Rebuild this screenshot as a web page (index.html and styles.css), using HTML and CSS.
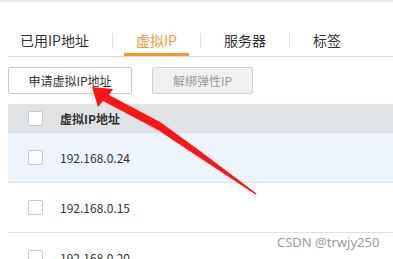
FILE: index.html
```html
<!DOCTYPE html>
<html lang="zh">
<head>
<meta charset="utf-8">
<link rel="stylesheet" href="styles.css">
</head>
<body>
<div class="topbar"></div>
<div class="page">
  <div class="tabs">
    <div class="tab">已用IP地址</div>
    <div class="sep"></div>
    <div class="tab active">虚拟IP</div>
    <div class="sep"></div>
    <div class="tab">服务器</div>
    <div class="sep"></div>
    <div class="tab">标签</div>
  </div>
  <div class="actions">
    <button class="btn">申请虚拟IP地址</button>
    <button class="btn disabled">解绑弹性IP</button>
  </div>
  <div class="table">
    <div class="row head"><span class="cb"></span><span class="cell">虚拟IP地址</span></div>
    <div class="row hover"><span class="cb"></span><span class="cell">192.168.0.24</span></div>
    <div class="row"><span class="cb"></span><span class="cell">192.168.0.15</span></div>
    <div class="row"><span class="cb"></span><span class="cell">192.168.0.20</span></div>
  </div>
</div>
<div class="watermark">CSDN @trwjy250</div>
<svg class="arrow" width="393" height="259" viewBox="0 0 393 259">
  <polygon fill="#ff1414" points="92,87 113,89 109,95 160,122 196,148 256.5,193.5 255.5,194.5 194,154 158,130 103,101 98,107"/>
</svg>
</body>
</html>
```
FILE: styles.css
```css
html, body {
  margin: 0;
  padding: 0;
  background: #fff;
  font-family: "Noto Sans CJK SC", "Noto Sans", sans-serif;
  color: #333;
  overflow: hidden;
  width: 393px;
  height: 259px;
  position: relative;
}
.topbar {
  height: 2px;
  background: #e9e9e9;
}
.page {
  padding-left: 8px;
}
.tabs {
  display: flex;
  align-items: flex-start;
  margin-top: 28px;
  border-bottom: 1px solid #dcdcdc;
}
.tab {
  font-size: 14px;
  line-height: 20px;
  padding: 0 12px 3px;
  border-bottom: 3px solid transparent;
  color: #333;
}
.tab.active {
  color: #f5953a;
  border-bottom-color: #f7962f;
}
.sep {
  width: 1px;
  height: 15px;
  margin: 3px 11px 0;
  background: #dddddd;
}
.actions {
  display: flex;
  gap: 20px;
  margin-top: 10px;
}
.btn {
  font-family: inherit;
  font-size: 12px;
  height: 27px;
  padding: 0;
  width: 124px;
  background: #fff;
  border: 1px solid #c9c9c9;
  border-radius: 2px;
  color: #333;
}
.btn.disabled {
  width: 101px;
  background: #f0f0f0;
  border-color: #d2d2d2;
  color: #9a9a9a;
}
.table {
  margin-top: 10px;
}
.row {
  display: flex;
  align-items: center;
  height: 49px;
  padding-left: 20px;
  border-bottom: 1px solid #e0e0e0;
  font-size: 12px;
}
.row.head {
  height: 29px;
  background: #e0e3e5;
  border-bottom: none;
  font-weight: bold;
}
.row.hover {
  background: #edf4fc;
}
.cb {
  width: 13px;
  height: 13px;
  border: 1px solid #c8c8c8;
  border-radius: 2px;
  background: #fff;
  margin-right: 17px;
}
.cell {
  color: #333;
}
.watermark {
  position: absolute;
  left: 277px;
  top: 233px;
  font-family: "Noto Sans", sans-serif;
  font-size: 13px;
  color: #9c9c9c;
}
.arrow {
  position: absolute;
  left: 0;
  top: 0;
}
```
